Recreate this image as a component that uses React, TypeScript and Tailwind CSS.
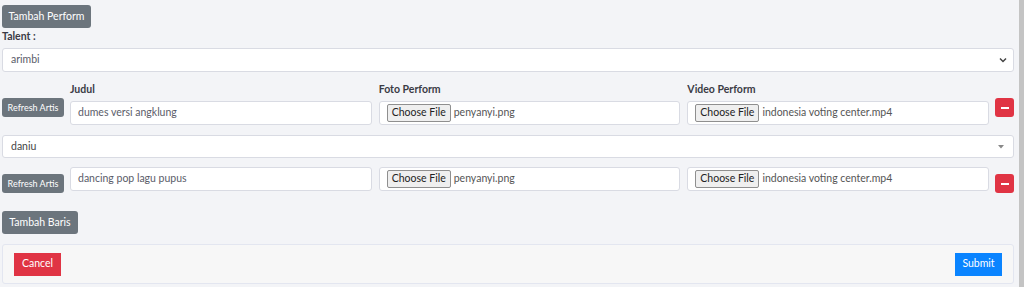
import React from 'react';

const font = { fontFamily: 'Lato, "Open Sans", sans-serif' };

const FileBox = ({ name }: { name: string }) => (
  <div className="flex h-[24px] flex-1 items-center whitespace-nowrap rounded-[3px] border border-[#d9dbe3] bg-white pl-[7px]">
    <span className="flex h-[18px] items-center rounded-[2px] border border-[#8f8f8f] bg-[#efefef] px-[4px] text-[10.5px] text-[#222]">
      Choose File
    </span>
    <span className="ml-[3px] text-[10.5px] text-[#555]">{name}</span>
  </div>
);

const MinusButton = ({ className }: { className: string }) => (
  <button className={`flex h-[19px] w-[19px] shrink-0 items-center justify-center rounded-[3px] bg-[#e03444] ${className}`}>
    <span className="block h-[2px] w-[8px] bg-white" />
  </button>
);

const RefreshButton = ({ className }: { className: string }) => (
  <button
    className={`h-[19px] w-[62px] shrink-0 whitespace-nowrap rounded-[3px] bg-[#6c757d] text-[9px] text-white ${className}`}
  >
    Refresh Artis
  </button>
);

const Label = ({ text }: { text: string }) => (
  <div className="mb-[5px] h-[13px] text-[10.5px] font-bold leading-[13px] text-[#3a3b45]">{text}</div>
);

const Row = ({ title, labels, first }: { title: string; labels: boolean; first: boolean }) => (
  <div className="flex items-start">
    <RefreshButton className={first ? 'mt-[15px]' : 'mt-[7px]'} />
    <div className="ml-[6px] flex flex-1 gap-[7px]">
      <div className="flex flex-1 flex-col">
        {labels && <Label text="Judul" />}
        <div className="flex h-[24px] items-center rounded-[3px] border border-[#d9dbe3] bg-white px-[7px] text-[10.5px] text-[#5a5c69]">
          {title}
        </div>
      </div>
      <div className="flex flex-1 flex-col">
        {labels && <Label text="Foto Perform" />}
        <FileBox name="penyanyi.png" />
      </div>
      <div className="flex flex-1 flex-col">
        {labels && <Label text="Video Perform" />}
        <FileBox name="indonesia voting center.mp4" />
      </div>
    </div>
    <MinusButton className={first ? 'ml-[6px] mt-[15px]' : 'ml-[6px] mt-[7px]'} />
  </div>
);

export default function App() {
  return (
    <div className="flex h-[287px] w-[1024px] overflow-hidden bg-[#f3f4f7]" style={font}>
      <div className="flex flex-1 flex-col pl-[2px] pr-[5px] pt-[5px]">
        <button className="h-[23px] w-[89px] whitespace-nowrap rounded-[3px] bg-[#6c757d] text-[10.5px] text-white">
          Tambah Perform
        </button>
        <div className="mt-0 text-[10.5px] font-bold leading-[16px] text-[#3a3b45]">Talent :</div>
        <div className="mt-[4px] flex h-[24px] items-center justify-between rounded-[3px] border border-[#d9dbe3] bg-white pl-[8px] pr-[5px] text-[10.5px] text-[#5a5c69]">
          <span>arimbi</span>
          <svg width="10" height="10" viewBox="0 0 10 10">
            <path d="M2 3.5 L5 6.5 L8 3.5" fill="none" stroke="#444" strokeWidth="1.5" />
          </svg>
        </div>
        <div className="mt-[11px]">
          <Row title="dumes versi angklung" labels first />
        </div>
        <div className="mt-[10px] flex h-[23px] items-center justify-between rounded-[3px] border border-[#d9dbe3] bg-white pl-[8px] pr-[8px] text-[10.5px] text-[#444]">
          <span>daniu</span>
          <svg width="8" height="6" viewBox="0 0 8 6">
            <path d="M1 1 L7 1 L4 4.5 Z" fill="#888" />
          </svg>
        </div>
        <div className="mt-[9px]">
          <Row title="dancing pop lagu pupus" labels={false} first={false} />
        </div>
        <button className="mt-[18px] h-[23px] w-[76px] whitespace-nowrap rounded-[3px] bg-[#6c757d] text-[10.5px] text-white">
          Tambah Baris
        </button>
        <div className="mt-[10px] flex h-[40px] items-center justify-between rounded-[3px] border border-[#e3e6f0] bg-[#f7f7f7] px-[11px]">
          <button className="h-[23px] w-[47px] bg-[#e03444] text-[10.5px] text-white">Cancel</button>
          <button className="h-[23px] w-[47px] bg-[#0a84ff] text-[10.5px] text-white">Submit</button>
        </div>
      </div>
      <div className="h-full w-[5px] bg-[#c4c4c4]" />
    </div>
  );
}
